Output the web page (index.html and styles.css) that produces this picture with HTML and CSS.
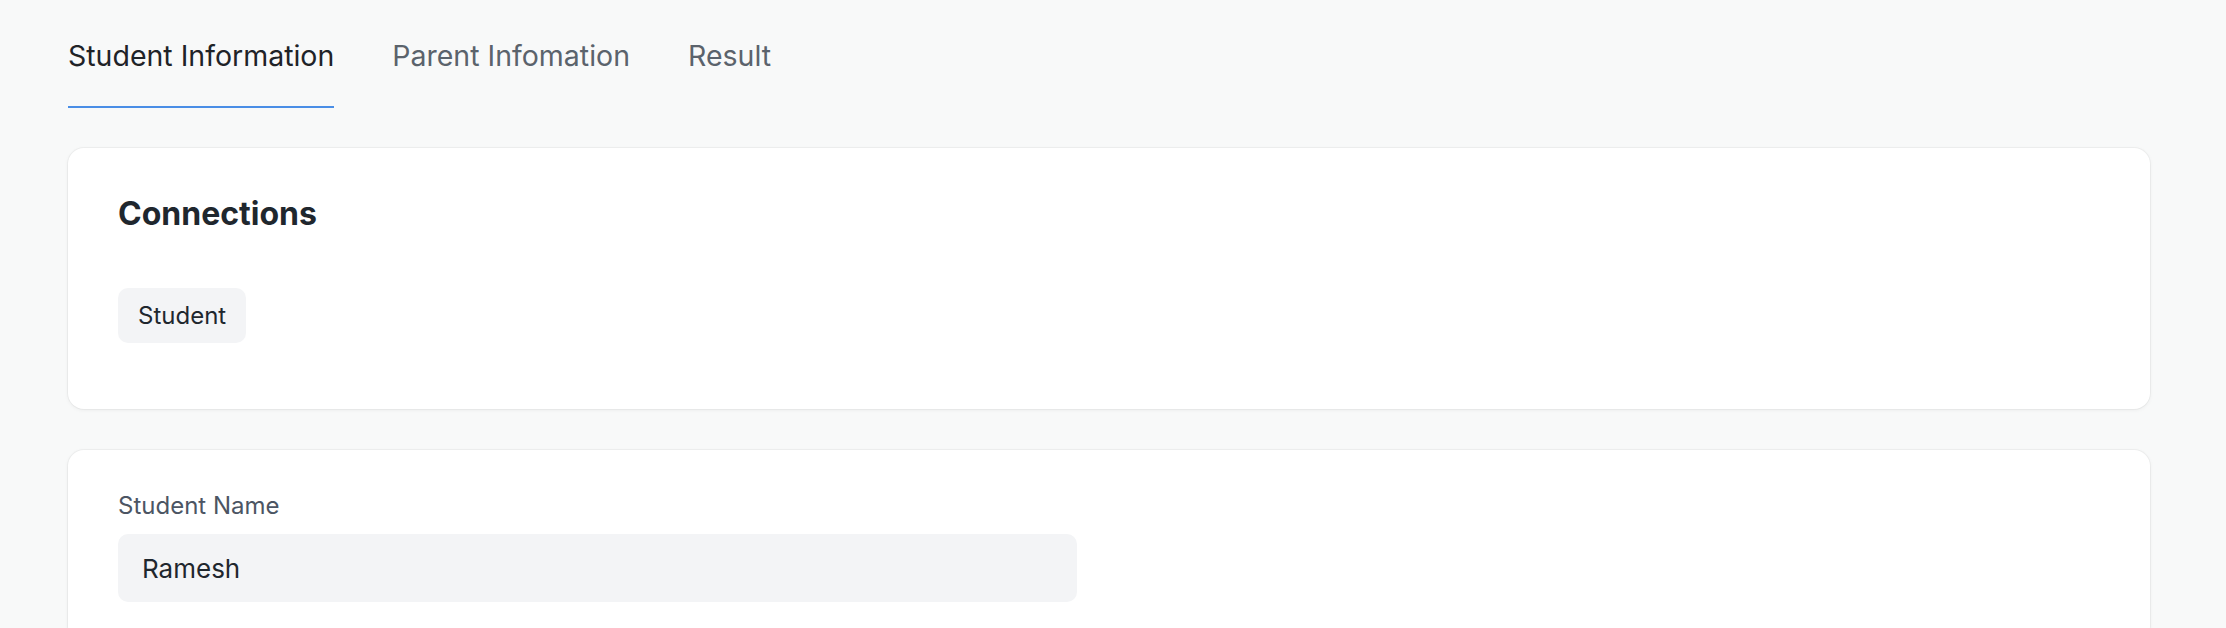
FILE: index.html
```html
<!DOCTYPE html>
<html lang="en">
<head>
<meta charset="utf-8">
<title>Student</title>
<link rel="stylesheet" href="styles.css">
</head>
<body>
<div class="page">
  <nav class="tabs">
    <a class="tab active">Student Information</a>
    <a class="tab">Parent Infomation</a>
    <a class="tab">Result</a>
  </nav>
  <section class="card connections">
    <h2 class="card-title">Connections</h2>
    <div class="chips">
      <span class="chip">Student</span>
    </div>
  </section>
  <section class="card form">
    <div class="field">
      <label class="field-label">Student Name</label>
      <div class="field-input">Ramesh</div>
    </div>
  </section>
</div>
</body>
</html>
```
FILE: styles.css
```css
* { box-sizing: border-box; }
html, body { margin: 0; padding: 0; }
body {
  background: #f8f9f9;
  font-family: Inter, "Noto Sans", sans-serif;
  color: #1f272e;
  height: 628px;
  overflow: hidden;
}
.page {
  padding: 39px 76px 0 68px;
}
.tabs {
  display: flex;
  gap: 58px;
}
.tab {
  font-size: 28.5px;
  line-height: 34px;
  color: #5b636c;
  padding-bottom: 33px;
  border-bottom: 2px solid transparent;
  cursor: pointer;
}
.tab.active {
  color: #1f2328;
  border-bottom-color: #4a8ee6;
}
.card {
  background: #fff;
  border-radius: 16px;
  box-shadow: 0 0 0 1px rgba(0,0,0,0.035), 0 1px 4px rgba(0,0,0,0.06);
}
.connections {
  margin-top: 40px;
  padding: 46px 50px 66px;
}
.card-title {
  margin: 0;
  font-size: 32px;
  line-height: 39px;
  font-weight: 700;
  color: #1f272e;
}
.chips {
  display: flex;
  gap: 12px;
  margin-top: 55px;
}
.chip {
  background: #f3f4f6;
  border-radius: 10px;
  font-size: 24px;
  line-height: 29px;
  padding: 13px 20px;
  color: #1f272e;
}
.form {
  margin-top: 41px;
  padding: 41px 50px 40px;
}
.field {
  width: 959px;
}
.field-label {
  display: block;
  font-size: 24px;
  line-height: 29px;
  color: #4c5563;
}
.field-input {
  margin-top: 14px;
  height: 68px;
  background: #f3f4f6;
  border-radius: 10px;
  padding: 0 24px;
  display: flex;
  align-items: center;
  font-size: 26px;
  color: #1f272e;
}
```
